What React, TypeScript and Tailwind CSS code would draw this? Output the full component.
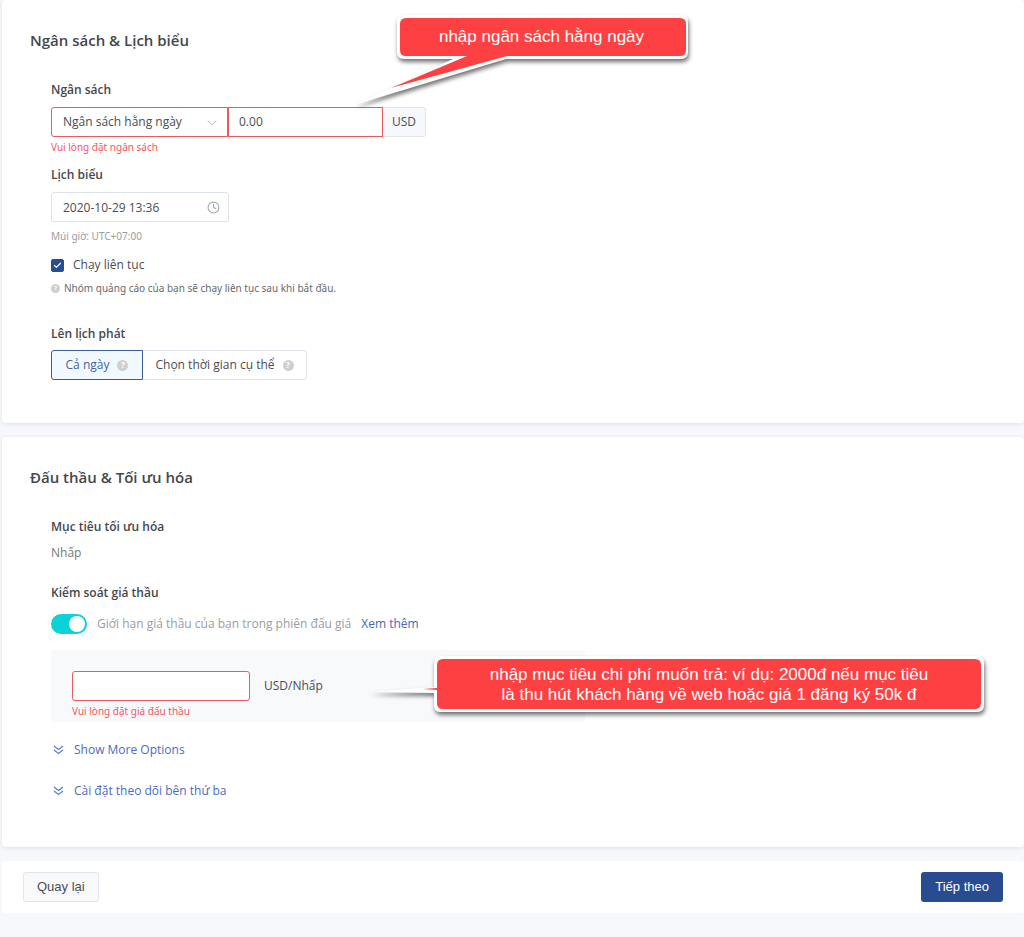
import { useState, type ReactNode } from "react";
import { Check, ChevronDown, Clock } from "lucide-react";

const callouts = {
  budget: {
    outline:
      "M55 5 H332 Q339 5 339 12 V42 Q339 49 332 49 H157 L5 95 L104 49 H55 Q48 49 48 42 V12 Q48 5 55 5 Z",
    fill: "M57 8 H331 Q337 8 337 14 V40 Q337 46 331 46 H158 L42 78 L118 46 H57 Q51 46 51 40 V14 Q51 8 57 8 Z",
  },
  bid: {
    outline:
      "M76 6 H613 Q620 6 620 13 V55 Q620 62 613 62 H76 Q70 62 70 55 V43 L5 42 L70 37 V13 Q70 6 76 6 Z",
    fill: "M79 9 H611 Q617 9 617 15 V53 Q617 59 611 59 H79 Q73 59 73 53 V40 L59 39 L73 38 V15 Q73 9 79 9 Z",
  },
};

function CalloutShape({ shape, className }: { shape: keyof typeof callouts; className: string }) {
  return (
    <svg
      aria-hidden="true"
      className={`absolute left-0 top-0 overflow-visible drop-shadow-[1px_3px_2px_rgba(0,0,0,0.55)] ${className}`}
    >
      <path d={callouts[shape].outline} fill="#fff" />
      <path d={callouts[shape].fill} fill="#fd4143" />
    </svg>
  );
}

function Card({ title, className = "", children }: { title: string; className?: string; children: ReactNode }) {
  return (
    <section className={`relative rounded bg-white px-7 pt-7 shadow-[0_1px_4px_rgba(40,60,80,0.12)] ${className}`}>
      <h2 className="text-[15px] font-semibold leading-6 text-[#43474d]">{title}</h2>
      <div className="mt-7 pl-[21px]">{children}</div>
    </section>
  );
}

function HelpDot({ className }: { className: string }) {
  return (
    <span
      aria-hidden="true"
      className={`inline-flex shrink-0 items-center justify-center rounded-full bg-[#cfcfcf] font-bold text-white ${className}`}
    >
      ?
    </span>
  );
}

function ExpandButton({ className, children }: { className: string; children: ReactNode }) {
  return (
    <button type="button" className={`flex items-center gap-[9px] leading-5 text-[#4a6cbd] ${className}`}>
      <svg viewBox="0 0 14 14" aria-hidden="true" className="size-3.5" fill="none" stroke="#5b82d6" strokeWidth="1.3">
        <path d="M3 3 L7.5 6.5 L12 3" />
        <path d="M3 7 L7.5 10.5 L12 7" />
      </svg>
      {children}
    </button>
  );
}

const labelClass = "block text-xs font-semibold leading-5 text-[#43474d]";
const errorClass = "mt-0.5 font-['Noto_Sans',sans-serif] text-[10px] leading-4 text-[#f0595f]";

export default function App() {
  const [continuous, setContinuous] = useState(true);
  const [bidCap, setBidCap] = useState(true);
  const [allDay, setAllDay] = useState(true);

  return (
    <div className="min-h-screen bg-[#f6f8fb] pl-0.5 font-['Open_Sans','Noto_Sans',sans-serif] text-xs text-[#4a4d52]">
      <Card title="Ngân sách & Lịch biểu" className="pb-[43px]">
        <label htmlFor="budget-type" className={labelClass}>
          Ngân sách
        </label>
        <div className="mt-[7px] flex h-[30px]">
          <div className="relative w-[177px]">
            <select
              id="budget-type"
              className="h-full w-full appearance-none rounded-l-[3px] border border-[#ec5a60] bg-white pl-[11px] pr-8 outline-none"
            >
              <option>Ngân sách hằng ngày</option>
            </select>
            <ChevronDown
              strokeWidth={1.5}
              className="pointer-events-none absolute right-2 top-2 size-4 text-[#b9bcc2]"
            />
          </div>
          <input
            aria-label="Số tiền ngân sách"
            defaultValue="0.00"
            className="w-[155px] border border-[#ec5a60] bg-white px-[10px] outline-none"
          />
          <span className="flex w-[43px] items-center justify-center rounded-r-[3px] border border-l-0 border-[#e2e6ec] bg-[#f6f8fb]">
            USD
          </span>
        </div>
        <p className={errorClass}>Vui lòng đặt ngân sách</p>

        <label htmlFor="start" className={`mt-[10px] ${labelClass}`}>
          Lịch biểu
        </label>
        <div className="relative mt-[7px] h-[30px] w-[178px]">
          <input
            id="start"
            defaultValue="2020-10-29 13:36"
            className="h-full w-full rounded-[3px] border border-[#dde3ea] bg-white pl-[11px] pr-8 outline-none"
          />
          <Clock strokeWidth={2} className="absolute right-[9px] top-[9px] size-[13px] text-[#a5a8ad]" />
        </div>
        <p className="mt-1.5 font-['Noto_Sans',sans-serif] text-[10px] leading-4 text-[#9a9da2]">Múi giờ: UTC+07:00</p>

        <label className="mt-[11px] flex items-center leading-5">
          <span className="relative mr-[9px] size-[13px]">
            <input
              type="checkbox"
              checked={continuous}
              onChange={(e) => setContinuous(e.target.checked)}
              className="peer block size-[13px] appearance-none rounded-xs border border-[#2a4d8f] bg-white checked:bg-[#2a4d8f]"
            />
            <Check
              strokeWidth={3}
              className="pointer-events-none absolute left-0.5 top-0.5 hidden size-[9px] text-white peer-checked:block"
            />
          </span>
          Chạy liên tục
        </label>
        <p className="mt-[5px] flex items-center font-['Noto_Sans',sans-serif] text-[10px] leading-4 text-[#66696e]">
          <HelpDot className="mr-1 size-[9px] text-[6px]" />
          Nhóm quảng cáo của bạn sẽ chạy liên tục sau khi bắt đầu.
        </p>

        <h3 className={`mt-7 ${labelClass}`}>Lên lịch phát</h3>
        <div className="mt-1.5 flex h-[30px]">
          <button
            type="button"
            aria-pressed={allDay}
            onClick={() => setAllDay(true)}
            className="flex w-[92px] items-center justify-center gap-2 rounded-l-[3px] border border-[#3a5c9b] bg-[#f1f8fe] text-[#44659f]"
          >
            Cả ngày
            <HelpDot className="size-[11px] text-[8px]" />
          </button>
          <button
            type="button"
            aria-pressed={!allDay}
            onClick={() => setAllDay(false)}
            className="flex w-[164px] items-center justify-center gap-2 rounded-r-[3px] border border-l-0 border-[#e0e4ea] bg-white"
          >
            Chọn thời gian cụ thể
            <HelpDot className="size-[11px] text-[8px]" />
          </button>
        </div>

        <div className="absolute left-[347px] top-[10px] h-[100px] w-[345px]">
          <CalloutShape shape="budget" className="h-[100px] w-[345px]" />
          <p className="relative ml-[50px] mt-[17px] w-[285px] text-center font-['Liberation_Sans',Arial,sans-serif] text-[17px] leading-5 text-white">
            nhập ngân sách hằng ngày
          </p>
        </div>
      </Card>

      <Card title="Đấu thầu & Tối ưu hóa" className="mt-3.5 pb-[46px]">
        <h3 className={labelClass}>Mục tiêu tối ưu hóa</h3>
        <p className="mt-1.5 leading-5 text-[#75787d]">Nhấp</p>

        <h3 className={`mt-5 ${labelClass}`}>Kiểm soát giá thầu</h3>
        <div className="mt-[11px] flex h-5 items-center">
          <button
            type="button"
            role="switch"
            aria-checked={bidCap}
            aria-labelledby="bid-cap"
            onClick={() => setBidCap(!bidCap)}
            className={`flex h-5 w-9 items-center rounded-full px-0.5 ${bidCap ? "justify-end bg-[#0ad2d6]" : "bg-[#c5c9cf]"}`}
          >
            <span className="size-4 rounded-full bg-white" />
          </button>
          <span id="bid-cap" className="ml-[10px] text-[#9a9da2]">
            Giới hạn giá thầu của bạn trong phiên đấu giá
          </span>
          <a href="#more" className="ml-[10px] text-[#4468bd]">
            Xem thêm
          </a>
        </div>

        <div className="relative mt-4 max-w-[534px] rounded-[3px] bg-[#f7f9fb] pb-[3px] pl-[21px] pt-[21px]">
          <div className="flex items-center gap-3.5">
            <input
              id="bid"
              aria-describedby="bid-error"
              className="h-[30px] w-[178px] rounded-[3px] border border-[#ec5a60] bg-white px-[10px] outline-none"
            />
            <label htmlFor="bid">USD/Nhấp</label>
          </div>
          <p id="bid-error" className={errorClass}>
            Vui lòng đặt giá đấu thầu
          </p>

          <div className="absolute left-[313px] top-0 h-[70px] w-[625px]">
            <CalloutShape shape="bid" className="h-[70px] w-[625px]" />
            <p className="relative ml-[73px] mt-[15px] w-[544px] text-center font-['Liberation_Sans',Arial,sans-serif] text-[17px] leading-5 text-white">
              nhập mục tiêu chi phí muốn trả: ví dụ: 2000đ nếu mục tiêu
              <br />
              là thu hút khách hàng về web hoặc giá 1 đăng ký 50k đ
            </p>
          </div>
        </div>

        <ExpandButton className="mt-[18px]">Show More Options</ExpandButton>
        <ExpandButton className="mt-[21px]">Cài đặt theo dõi bên thứ ba</ExpandButton>
      </Card>

      <footer className="mt-3.5 flex justify-between rounded bg-white px-[21px] py-[11px] font-['Liberation_Sans',Arial,sans-serif] text-[13px]">
        <button type="button" className="h-[30px] rounded-[3px] border border-[#e2e5ea] bg-[#f8f9fb] px-[13px]">
          Quay lại
        </button>
        <button type="button" className="h-[30px] rounded-[3px] bg-[#294c90] px-3.5 text-white">
          Tiếp theo
        </button>
      </footer>
    </div>
  );
}
